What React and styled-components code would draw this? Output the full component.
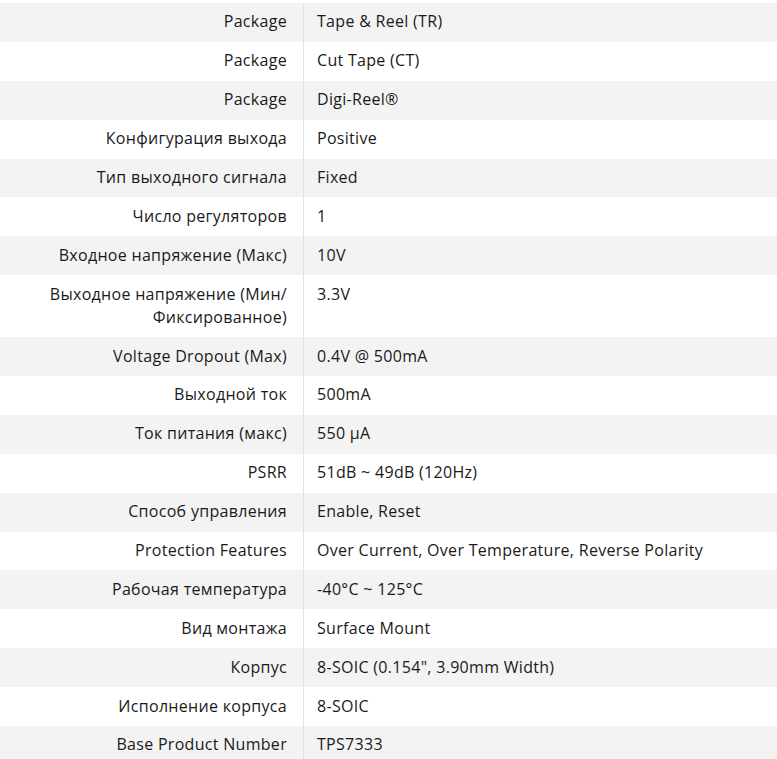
import React from "react";
import styled, { createGlobalStyle } from "styled-components";

const specs = [
  ["Package", "Tape & Reel (TR)"],
  ["Package", "Cut Tape (CT)"],
  ["Package", "Digi-Reel®"],
  ["Конфигурация выхода", "Positive"],
  ["Тип выходного сигнала", "Fixed"],
  ["Число регуляторов", "1"],
  ["Входное напряжение (Макс)", "10V"],
  ["Выходное напряжение (Мин/ Фиксированное)", "3.3V"],
  ["Voltage Dropout (Max)", "0.4V @ 500mA"],
  ["Выходной ток", "500mA"],
  ["Ток питания (макс)", "550 µA"],
  ["PSRR", "51dB ~ 49dB (120Hz)"],
  ["Способ управления", "Enable, Reset"],
  ["Protection Features", "Over Current, Over Temperature, Reverse Polarity"],
  ["Рабочая температура", "-40°C ~ 125°C"],
  ["Вид монтажа", "Surface Mount"],
  ["Корпус", "8-SOIC (0.154\", 3.90mm Width)"],
  ["Исполнение корпуса", "8-SOIC"],
  ["Base Product Number", "TPS7333"],
];

const App = () => {
  return (
    <>
      <GlobalStyle />
      <SpecList>
        {specs.map(([label, value], i) => (
          <Row key={i} $shaded={i % 2 === 0}>
            <Label>{label}</Label>
            <Value>{value}</Value>
          </Row>
        ))}
      </SpecList>
    </>
  );
};

export default App;

const GlobalStyle = createGlobalStyle`
  body {
    margin: 0;
    background: #fff;
    font-family: "Open Sans", "Liberation Sans", sans-serif;
  }
`;

const SpecList = styled.div`
  width: 777px;
  margin-top: 3px;
  font-size: 16px;
  line-height: 23px;
  letter-spacing: 0.3px;
  color: #1a1a1a;
`;

const Row = styled.div`
  display: flex;
  background: ${(props) => (props.$shaded ? "#f3f3f3" : "#fff")};
`;

const Label = styled.div`
  flex: 0 0 304px;
  box-sizing: border-box;
  padding: 7.4px 16px 8.5px 0;
  text-align: right;
  border-right: 1px solid #e2e2e2;
`;

const Value = styled.div`
  flex: 1;
  padding: 7.4px 0 8.5px 13px;
`;
